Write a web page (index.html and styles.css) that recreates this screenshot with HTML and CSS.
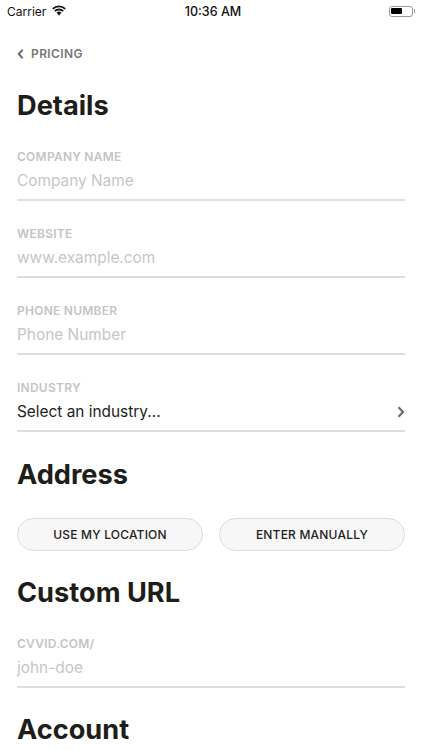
FILE: index.html
```html
<!DOCTYPE html>
<html lang="en">
<head>
<meta charset="utf-8">
<title>Details</title>
<link rel="stylesheet" href="styles.css">
</head>
<body>
<div class="screen">
  <header class="status">
    <div class="status-left">
      <span>Carrier</span>
      <svg class="wifi" viewBox="0 0 16 12" width="14" height="11"><path d="M8 11.8 5.2 8.6a4 4 0 0 1 5.6 0z" fill="#111"/><path d="M.9 4.2a10.2 10.2 0 0 1 14.2 0M3.2 6.8a6.9 6.9 0 0 1 9.6 0" fill="none" stroke="#111" stroke-width="2.1"/></svg>
    </div>
    <div class="status-time">10:36 AM</div>
    <div class="status-right">
      <div class="battery"><div class="battery-fill"></div></div>
      <div class="battery-tip"></div>
    </div>
  </header>

  <main class="content">
    <a class="back">
      <svg viewBox="0 0 8 12" width="7" height="12"><path d="M6.5 1.2 2 6l4.5 4.8" fill="none" stroke="#6f6f6f" stroke-width="2.3"/></svg>
      <span>PRICING</span>
    </a>

    <h1 class="title title-details">Details</h1>

    <div class="field">
      <label class="label">COMPANY NAME</label>
      <div class="value placeholder">Company Name</div>
    </div>
    <div class="field">
      <label class="label">WEBSITE</label>
      <div class="value placeholder">www.example.com</div>
    </div>
    <div class="field">
      <label class="label">PHONE NUMBER</label>
      <div class="value placeholder">Phone Number</div>
    </div>
    <div class="field">
      <label class="label">INDUSTRY</label>
      <div class="value select">
        <span>Select an industry...</span>
        <svg viewBox="0 0 8 12" width="8" height="12"><path d="M1.5 1.2 6 6l-4.5 4.8" fill="none" stroke="#6f6f6f" stroke-width="2.3"/></svg>
      </div>
    </div>

    <h1 class="title title-address">Address</h1>
    <div class="buttons">
      <button class="pill">USE MY LOCATION</button>
      <button class="pill">ENTER MANUALLY</button>
    </div>

    <h1 class="title title-url">Custom URL</h1>
    <div class="field">
      <label class="label">CVVID.COM/</label>
      <div class="value placeholder">john-doe</div>
    </div>

    <h1 class="title title-account">Account</h1>
  </main>
</div>
</body>
</html>
```
FILE: styles.css
```css
* { box-sizing: border-box; }
html, body {
  margin: 0;
  padding: 0;
  background: #fff;
  height: 750px;
  overflow: hidden;
}
body { font-family: Inter, "Liberation Sans", sans-serif; color: #1f1d1a; }
.screen { width: 422px; height: 750px; overflow: hidden; }

.status {
  height: 22px;
  padding: 0 7px;
  display: grid;
  grid-template-columns: 1fr auto 1fr;
  align-items: center;
  font-size: 12px;
  color: #111;
}
.status-left { display: flex; align-items: center; gap: 6px; }
.wifi { margin-top: -2px; }
.status-time { font-weight: 500; font-size: 12.5px; margin-left: 4px; }
.status-right { display: flex; justify-content: flex-end; align-items: center; }
.battery {
  width: 24px;
  height: 11px;
  border: 1px solid #9a9a9a;
  border-radius: 3px;
  padding: 1.5px;
}
.battery-fill { width: 11px; height: 100%; background: #000; border-radius: 1px; }
.battery-tip { width: 1.5px; height: 4px; background: #9a9a9a; margin-left: 1px; }

.content { padding: 0 17px; }
.back {
  display: flex;
  align-items: center;
  gap: 7px;
  margin-top: 23px;
  height: 17px;
  font-size: 12px;
  font-weight: 600;
  letter-spacing: 0.4px;
  color: #777;
}
.title {
  margin: 0;
  font-size: 27.2px;
  line-height: 36px;
  font-weight: 700;
  color: #1f1d1a;
}
.title-details { margin-top: 26px; }
.title-address { margin-top: 25px; }
.title-url { margin-top: 24px; }
.title-account { margin-top: 24px; }

.title + .field { margin-top: 25px; }
.field + .field { margin-top: 25px; }
.label {
  display: block;
  font-size: 12px;
  line-height: 15px;
  font-weight: 600;
  letter-spacing: 0.25px;
  color: #c4c4c4;
}
.value {
  font-size: 15.4px;
  line-height: 20px;
  margin-top: 7px;
  height: 30px;
  border-bottom: 2px solid #dedede;
}
.placeholder { color: #c6c6c6; }
.select {
  display: flex;
  justify-content: space-between;
  align-items: flex-start;
  color: #222;
}
.select svg { margin-top: 4px; }

.buttons { display: flex; gap: 16px; margin-top: 25px; }
.pill {
  flex: 1;
  height: 33px;
  padding: 0;
  border: 1px solid #dcdcdc;
  border-radius: 17px;
  background: #f7f7f7;
  font-family: inherit;
  font-size: 12px;
  font-weight: 500;
  letter-spacing: 0.2px;
  color: #222;
}
```
